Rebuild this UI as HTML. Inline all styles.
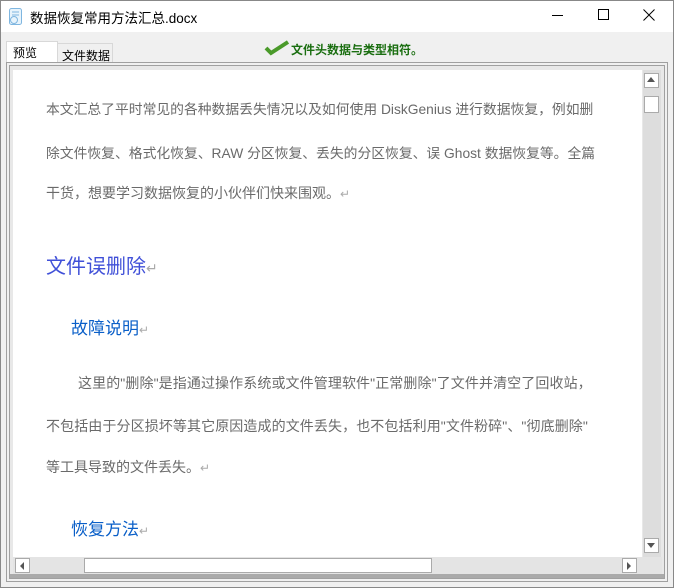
<!DOCTYPE html><html><head><meta charset="utf-8"><style>
*{margin:0;padding:0;box-sizing:border-box}
body{width:674px;height:588px;overflow:hidden;background:#f0f0f0;font-family:"Liberation Sans","Noto Sans CJK SC",sans-serif;position:relative}
.a{position:absolute}
.win{left:0;top:0;width:674px;height:588px;border:1px solid #888}
.t{white-space:nowrap}
.p{color:#6a6a6a;font-size:14px;letter-spacing:0;white-space:nowrap}
.rt{color:#aaa;font-size:12px}
</style></head><body>
<div class="a win"></div>
<div class="a" style="left:1px;top:1px;width:672px;height:31px;background:#fff"></div>
<svg class="a" style="left:8px;top:8px" width="16" height="18"><rect x="1.5" y="0.5" width="12" height="16" rx="2" fill="#e8f4fc" stroke="#7fb6e0"/><circle cx="6" cy="12" r="3.5" fill="none" stroke="#7fb6e0"/><line x1="4" y1="4" x2="11" y2="4" stroke="#7fb6e0"/><line x1="4" y1="7" x2="11" y2="7" stroke="#7fb6e0"/></svg>
<div class="a t" style="left:30px;top:7px;font-size:13.5px;color:#000">数据恢复常用方法汇总.docx</div>
<div class="a" style="left:552px;top:15px;width:11px;height:1px;background:#000"></div>
<div class="a" style="left:598px;top:9px;width:11px;height:11px;border:1px solid #000"></div>
<svg class="a" style="left:643px;top:9px" width="12" height="12"><path d="M0.5 0.5L11.5 11.5M11.5 0.5L0.5 11.5" stroke="#000"/></svg>
<div class="a" style="left:6px;top:41px;width:52px;height:22px;background:#fff;border:1px solid #d8d8d8;border-bottom:none"></div>
<div class="a t" style="left:13px;top:44px;font-size:12px">预览</div>
<div class="a" style="left:57px;top:43px;width:56px;height:19px;background:#f0f0f0;border:1px solid #d8d8d8;border-bottom:none"></div>
<div class="a t" style="left:62px;top:47px;font-size:12px">文件数据</div>
<svg class="a" style="left:264px;top:40px" width="26" height="16"><path d="M2 8l5 5L24 2" stroke="#4a9a2a" stroke-width="4" fill="none"/></svg>
<div class="a t" style="left:291px;top:41px;font-size:12px;color:#1a6e10;font-weight:bold">文件头数据与类型相符。</div>
<div class="a" style="left:6px;top:62px;width:662px;height:520px;border:1px solid #a0a0a0;background:#f0f0f0"></div>
<div class="a" style="left:9px;top:65px;width:656px;height:514px;border:1px solid #a0a0a0;background:#aaa"></div>
<div class="a" style="left:10px;top:66px;width:654px;height:508px;background:#e8e8e8"></div>
<div class="a" style="left:13px;top:70px;width:629px;height:487px;background:#fff"></div>
<div class="a" style="left:643px;top:70px;width:18px;height:487px;background:#ddd"></div>
<div class="a" style="left:644px;top:73px;width:15px;height:15px;background:#fff;border:1px solid #aaa"></div>
<svg class="a" style="left:647px;top:77px" width="9" height="6"><path d="M0 5h8L4 0z" fill="#555"/></svg>
<div class="a" style="left:644px;top:96px;width:15px;height:17px;background:#fff;border:1px solid #aaa"></div>
<div class="a" style="left:644px;top:538px;width:15px;height:15px;background:#fff;border:1px solid #aaa"></div>
<svg class="a" style="left:647px;top:543px" width="9" height="6"><path d="M0 0h8L4 5z" fill="#555"/></svg>
<div class="a" style="left:13px;top:557px;width:649px;height:17px;background:#e4e4e4"></div>
<div class="a" style="left:15px;top:558px;width:15px;height:15px;background:#fff;border:1px solid #aaa"></div>
<svg class="a" style="left:20px;top:562px" width="5" height="8"><path d="M4 0v8L0 4z" fill="#555"/></svg>
<div class="a" style="left:84px;top:558px;width:348px;height:15px;background:#fff;border:1px solid #aaa"></div>
<div class="a" style="left:622px;top:558px;width:15px;height:15px;background:#fff;border:1px solid #aaa"></div>
<svg class="a" style="left:627px;top:562px" width="5" height="8"><path d="M0 0v8L4 4z" fill="#555"/></svg>

<div class="a p" style="left:46px;top:98px;font-size:13.8px">本文汇总了平时常见的各种数据丢失情况以及如何使用 DiskGenius 进行数据恢复，例如删</div>
<div class="a p" style="left:46px;top:142px;font-size:13.8px">除文件恢复、格式化恢复、RAW 分区恢复、丢失的分区恢复、误 Ghost 数据恢复等。全篇</div>
<div class="a p" style="left:46px;top:183px">干货，想要学习数据恢复的小伙伴们快来围观。<span class="rt">↵</span></div>
<div class="a t" style="left:46px;top:250px;font-size:20px;color:#4050d8">文件误删除<span class="rt" style="font-size:14px">↵</span></div>
<div class="a t" style="left:71px;top:314px;font-size:17px;color:#0a5fc8">故障说明<span class="rt">↵</span></div>
<div class="a p" style="left:78px;top:373px;letter-spacing:0.1px">这里的"删除"是指通过操作系统或文件管理软件"正常删除"了文件并清空了回收站，</div>
<div class="a p" style="left:46px;top:416px;letter-spacing:0.1px">不包括由于分区损坏等其它原因造成的文件丢失，也不包括利用"文件粉碎"、"彻底删除"</div>
<div class="a p" style="left:46px;top:457px">等工具导致的文件丢失。<span class="rt">↵</span></div>
<div class="a t" style="left:71px;top:515px;font-size:17px;color:#0a5fc8">恢复方法<span class="rt">↵</span></div>
</body></html>
